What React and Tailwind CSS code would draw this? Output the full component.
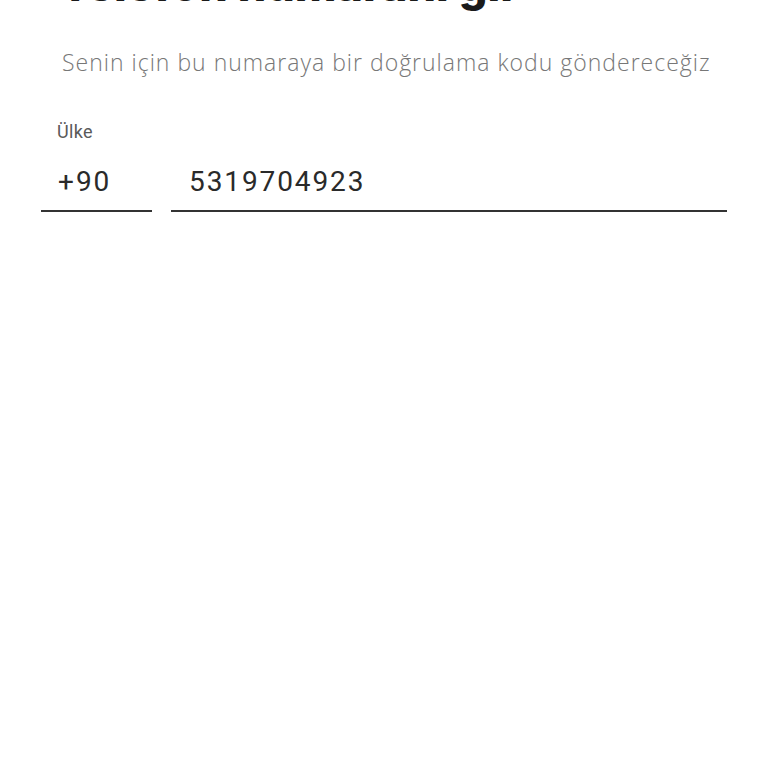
export default function App() {
  return (
    <div className="w-[768px] h-[768px] bg-white overflow-hidden">
      <h1
        className="-mt-[41px] pl-[60px] text-[45px] leading-[52px] font-extrabold text-[#1a1a1a]"
        style={{ fontFamily: "Inter, 'Noto Sans', sans-serif" }}
      >
        Telefon numaranı gir
      </h1>
      <p
        className="mt-[35px] pl-[62px] text-[23px] leading-[32px] tracking-[1px] font-light text-[#777777]"
        style={{ fontFamily: "'Open Sans', 'Noto Sans', sans-serif" }}
      >
        Senin için bu numaraya bir doğrulama kodu göndereceğiz
      </p>
      <div
        className="mt-[44px] flex gap-[19px] px-[41px]"
        style={{ fontFamily: "Roboto, 'Noto Sans', sans-serif" }}
      >
        <div className="flex w-[111px] flex-col">
          <span className="pl-[16px] text-[18px] leading-[20px] tracking-[0.3px] text-[#5a5a5a]">Ülke</span>
          <div className="mt-[22px] border-b-2 border-[#333333] pb-[10px] pl-[17px] text-[28px] leading-[36px] tracking-[2px] text-[#2a2a2a]">
            +90
          </div>
        </div>
        <div className="flex flex-1 flex-col justify-end">
          <div className="border-b-2 border-[#333333] pb-[10px] pl-[18px] text-[28px] leading-[36px] tracking-[1.9px] text-[#2a2a2a]">
            5319704923
          </div>
        </div>
      </div>
    </div>
  );
}
